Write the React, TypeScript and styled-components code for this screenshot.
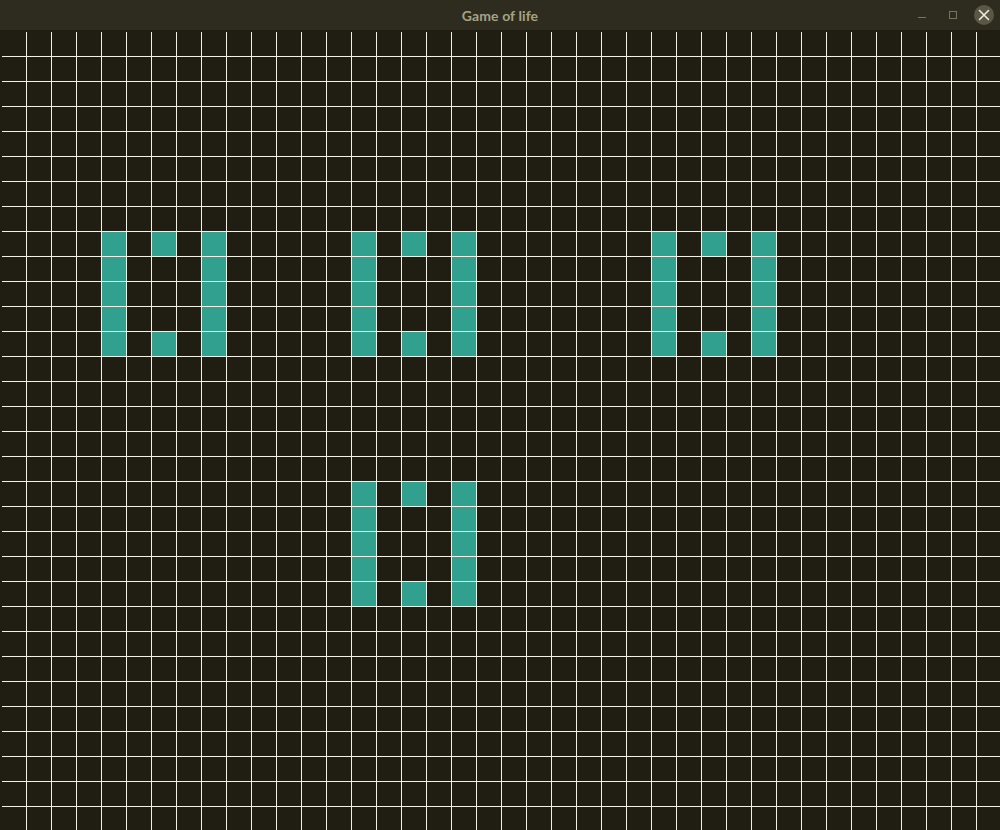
import React from "react";
import styled, { createGlobalStyle } from "styled-components";

const COLS = 40;
const ROWS = 32;

const GlobalStyle = createGlobalStyle`
  html, body {
    margin: 0;
    padding: 0;
    background: #201e13;
    overflow: hidden;
  }
  #root {
    width: 1000px;
    height: 830px;
  }
`;

const Window = styled.div`
  width: 1000px;
  height: 830px;
  display: flex;
  flex-direction: column;
  background: #201e13;
  overflow: hidden;
`;

const TitleBar = styled.div`
  height: 30px;
  flex: 0 0 30px;
  display: grid;
  grid-template-columns: 1fr auto 1fr;
  align-items: center;
  background: #2e2c1f;
`;

const Title = styled.div`
  grid-column: 2;
  font-family: Lato, "Noto Sans", sans-serif;
  font-weight: 700;
  font-size: 14px;
  color: #a6a385;
  letter-spacing: 0.1px;
  padding-top: 1px;
`;

const Controls = styled.div`
  grid-column: 3;
  justify-self: end;
  display: flex;
  align-items: center;
  gap: 11px;
  padding-right: 6px;
`;

const ControlButton = styled.div<{ $close?: boolean }>`
  width: 20px;
  height: 20px;
  border-radius: 50%;
  display: flex;
  align-items: center;
  justify-content: center;
  background: ${(p) => (p.$close ? "#5a5844" : "transparent")};
  color: ${(p) => (p.$close ? "#ecebe4" : "#77745d")};
`;

const Board = styled.div`
  flex: 1;
  overflow: hidden;
  padding: 2px 0 0 2px;
`;

const Grid = styled.div`
  display: grid;
  grid-template-columns: repeat(${COLS}, 24px);
  grid-auto-rows: 24px;
  gap: 1px;
  width: max-content;
  background: #f3f1e6;
`;

const Cell = styled.div<{ $alive: boolean }>`
  background: ${(p) => (p.$alive ? "#31a08e" : "#201e13")};
`;

// pattern: left column full, middle top & bottom, right column full
const shapeOrigins: [number, number][] = [
  [8, 4],
  [8, 14],
  [8, 26],
  [18, 14],
];

const alive = new Set<string>();
for (const [r0, c0] of shapeOrigins) {
  for (let i = 0; i < 5; i++) {
    alive.add(`${r0 + i},${c0}`);
    alive.add(`${r0 + i},${c0 + 4}`);
  }
  alive.add(`${r0},${c0 + 2}`);
  alive.add(`${r0 + 4},${c0 + 2}`);
}

export default function App() {
  const cells = [];
  for (let r = 0; r < ROWS; r++) {
    for (let c = 0; c < COLS; c++) {
      cells.push(<Cell key={`${r}-${c}`} $alive={alive.has(`${r},${c}`)} />);
    }
  }
  return (
    <>
      <GlobalStyle />
      <Window>
        <TitleBar>
          <Title>Game of life</Title>
          <Controls>
            <ControlButton>
              <svg width="10" height="10" viewBox="0 0 10 10">
                <line x1="1" y1="7.5" x2="9" y2="7.5" stroke="currentColor" strokeWidth="1" />
              </svg>
            </ControlButton>
            <ControlButton>
              <svg width="10" height="10" viewBox="0 0 10 10">
                <rect x="1.5" y="1.5" width="7" height="7" fill="none" stroke="currentColor" strokeWidth="1" />
              </svg>
            </ControlButton>
            <ControlButton $close>
              <svg width="12" height="12" viewBox="0 0 12 12">
                <path d="M1.5 1.5 L10.5 10.5 M10.5 1.5 L1.5 10.5" stroke="currentColor" strokeWidth="1.6" strokeLinecap="round" />
              </svg>
            </ControlButton>
          </Controls>
        </TitleBar>
        <Board>
          <Grid>{cells}</Grid>
        </Board>
      </Window>
    </>
  );
}
